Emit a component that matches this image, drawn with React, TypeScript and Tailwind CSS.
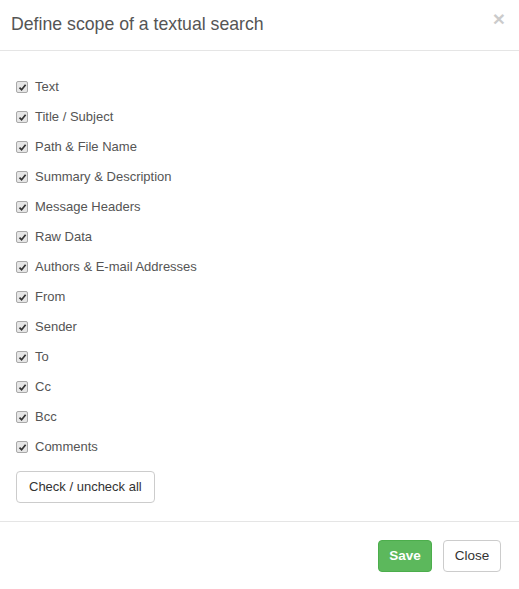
const FIELDS = [
  'Text',
  'Title / Subject',
  'Path & File Name',
  'Summary & Description',
  'Message Headers',
  'Raw Data',
  'Authors & E-mail Addresses',
  'From',
  'Sender',
  'To',
  'Cc',
  'Bcc',
  'Comments',
]

function Check() {
  return (
    <span className="w-[12px] h-[12px] rounded-[2px] border border-[#a9a9a9] bg-[#e6e6e6] flex items-center justify-center">
      <svg width="9" height="9" viewBox="0 0 9 9">
        <path d="M1.5 4.6 L3.6 6.8 L7.6 1.8" fill="none" stroke="#333" strokeWidth="1.7" />
      </svg>
    </span>
  )
}

export default function App() {
  return (
    <div className="w-[519px] h-[589px] bg-white text-[#555] font-['Liberation_Sans',Arial,sans-serif]">
      {/* Header */}
      <div className="h-[51px] border-b border-[#e5e5e5] flex items-center justify-between pl-[11px] pr-[14px]">
        <h4 className="text-[17.7px] leading-[26px] text-[#555] pb-[2px]">Define scope of a textual search</h4>
        <span className="text-[21px] font-bold leading-none text-black opacity-20 -mt-[13px]">×</span>
      </div>

      {/* Body */}
      <div className="pl-[16px] pt-[21px] pb-[18px]">
        {FIELDS.map(f => (
          <label key={f} className="h-[30px] flex items-center gap-[7px] text-[13px]">
            <Check />
            <span>{f}</span>
          </label>
        ))}
        <button className="mt-[9px] h-[32px] px-[12px] rounded-[4px] border border-[#ccc] bg-white text-[13px] text-[#333]">
          Check / uncheck all
        </button>
      </div>

      {/* Footer */}
      <div className="border-t border-[#e5e5e5] flex justify-end gap-[11px] pt-[18px] pr-[18px]">
        <button className="h-[32px] w-[54px] rounded-[4px] border border-[#4cae4c] bg-[#5cb85c] text-white text-[13.5px] font-semibold">
          Save
        </button>
        <button className="h-[32px] w-[58px] rounded-[4px] border border-[#ccc] bg-white text-[#333] text-[13.5px]">
          Close
        </button>
      </div>
    </div>
  )
}
